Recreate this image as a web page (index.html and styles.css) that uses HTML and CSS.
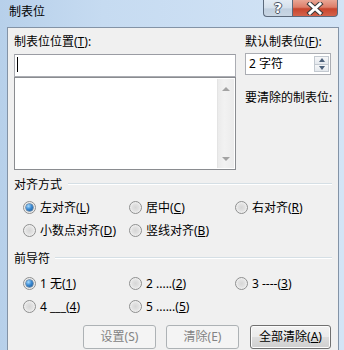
FILE: index.html
```html
<!DOCTYPE html>
<html>
<head>
<meta charset="utf-8">
<link rel="stylesheet" href="styles.css">
</head>
<body>
<div class="window">
  <div class="titlebar">
    <div class="title">制表位</div>
    <div class="caption">
      <div class="cbtn help"><span class="qmark">?</span></div>
      <div class="cbtn close">
        <svg width="18" height="13" viewBox="0 0 18 13">
          <path d="M4 2 L14 11 M14 2 L4 11" stroke="#3a3a3a" stroke-width="5" stroke-linecap="square" fill="none"/>
          <path d="M4 2 L14 11 M14 2 L4 11" stroke="#ffffff" stroke-width="3" stroke-linecap="square" fill="none"/>
        </svg>
      </div>
    </div>
  </div>
  <div class="client">
    <div class="top">
      <div class="leftcol">
        <div class="lbl">制表位位置(<u>T</u>):</div>
        <div class="input"><span class="caret"></span></div>
        <div class="list">
          <div class="list-body"></div>
          <div class="vscroll">
            <span class="arr up"></span>
            <span class="arr down"></span>
          </div>
        </div>
      </div>
      <div class="rightcol">
        <div class="lbl">默认制表位(<u>F</u>):</div>
        <div class="spin">
          <span class="spin-val">2 字符</span>
          <div class="spin-btns">
            <div class="sb"><span class="sarr up"></span></div>
            <div class="sb"><span class="sarr down"></span></div>
          </div>
        </div>
        <div class="lbl clear-lbl">要清除的制表位:</div>
      </div>
    </div>

    <div class="group g1">
      <div class="ghead"><span class="gtitle">对齐方式</span><span class="gline"></span></div>
      <div class="radios">
        <div class="opt"><span class="radio on"></span><span>左对齐(<u>L</u>)</span></div>
        <div class="opt"><span class="radio"></span><span>居中(<u>C</u>)</span></div>
        <div class="opt"><span class="radio"></span><span>右对齐(<u>R</u>)</span></div>
        <div class="opt"><span class="radio"></span><span>小数点对齐(<u>D</u>)</span></div>
        <div class="opt"><span class="radio"></span><span>竖线对齐(<u>B</u>)</span></div>
      </div>
    </div>

    <div class="group g2">
      <div class="ghead"><span class="gtitle">前导符</span><span class="gline"></span></div>
      <div class="radios">
        <div class="opt"><span class="radio on"></span><span>1 无(<u>1</u>)</span></div>
        <div class="opt"><span class="radio"></span><span>2 .....(<u>2</u>)</span></div>
        <div class="opt"><span class="radio"></span><span>3 ----(<u>3</u>)</span></div>
        <div class="opt"><span class="radio"></span><span>4 ___(<u>4</u>)</span></div>
        <div class="opt"><span class="radio"></span><span>5 ......(<u>5</u>)</span></div>
      </div>
    </div>

    <div class="buttons">
      <div class="btn disabled b1">设置(S)</div>
      <div class="btn disabled b2">清除(E)</div>
      <div class="btn b3">全部清除(<u>A</u>)</div>
    </div>
  </div>
</div>
</body>
</html>
```

FILE: styles.css
```css
* { box-sizing: border-box; }
html, body { margin: 0; padding: 0; }
body {
  width: 344px;
  height: 350px;
  overflow: hidden;
  font-family: "Noto Sans", "Noto Sans CJK SC", sans-serif;
  font-size: 12px;
  line-height: 16px;
  color: #000;
}
u { text-decoration: underline; text-underline-offset: 1px; }

.window {
  width: 344px;
  height: 350px;
  display: flex;
  flex-direction: column;
  background: linear-gradient(to right, #b7d0ea 0%, #c6dbf1 30%, #d3e4f6 100%);
}

.titlebar {
  height: 27px;
  flex: none;
  display: flex;
  align-items: flex-start;
}
.title {
  flex: 1;
  padding-left: 9px;
  padding-top: 3px;
  line-height: 16px;
  font-family: "Noto Sans CJK SC", sans-serif;
}
.caption {
  display: flex;
  margin-right: 6px;
}
.cbtn {
  height: 17px;
  border: 1px solid #5c6a7c;
  border-top: none;
  display: flex;
  align-items: center;
  justify-content: center;
}
.help {
  width: 29px;
  border-radius: 0 0 0 4px;
  border-right: none;
  background: linear-gradient(to bottom, #e3ebf4 0%, #d4dfeb 50%, #c0cfdf 55%, #c9d6e4 100%);
}
.qmark {
  font-family: "DejaVu Sans", sans-serif;
  font-weight: bold;
  font-size: 14px;
  line-height: 14px;
  color: #fff;
  text-shadow: -1px 0 #4a5565, 1px 0 #4a5565, 0 -1px #4a5565, 0 1px #4a5565;
}
.close {
  width: 46px;
  border-radius: 0 0 4px 0;
  background: linear-gradient(to bottom, #e9a695 0%, #dd7e69 45%, #c8452d 55%, #d4634b 100%);
}

.client {
  flex: 1;
  margin: 0 5px 0 7px;
  background: #f0f0f0;
  border: 1px solid #8393a6;
  border-bottom: none;
  padding: 6px 6px 0 6px;
}

.top {
  display: flex;
  gap: 9px;
}
.leftcol { width: 222px; display: flex; flex-direction: column; }
.rightcol { width: 86px; display: flex; flex-direction: column; }
.lbl { height: 16px; white-space: nowrap; }

.input {
  margin-top: 4px;
  height: 23px;
  background: #fff;
  border: 1px solid #abadb3;
  border-top-color: #9a9ca3;
  position: relative;
}
.caret {
  position: absolute;
  left: 2px;
  top: 2px;
  width: 1px;
  height: 15px;
  background: #000;
}
.list {
  height: 93px;
  background: #fff;
  border: 1px solid #8a8c90;
  display: flex;
}
.list-body { flex: 1; }
.vscroll {
  width: 17px;
  margin: 1px 1px 1px 0;
  background: linear-gradient(to right, #ebebeb, #f2f2f2 40%, #ebebeb);
  border-left: 1px solid #e4e4e4;
  display: flex;
  flex-direction: column;
  justify-content: space-between;
  align-items: center;
  padding: 8px 0 7px 0;
}
.arr { width: 0; height: 0; border-left: 4px solid transparent; border-right: 4px solid transparent; }
.arr.up { border-bottom: 4px solid #a3a3a3; }
.arr.down { border-top: 4px solid #a3a3a3; }

.spin {
  margin-top: 3px;
  height: 22px;
  background: #fff;
  border: 1px solid #abadb3;
  display: flex;
  align-items: center;
  padding-left: 3px;
}
.spin-val { flex: 1; font-family: "Noto Sans", "Noto Sans CJK SC", sans-serif; }
.spin-btns {
  width: 16px;
  align-self: stretch;
  display: flex;
  flex-direction: column;
  padding: 2px 1px 2px 0;
}
.sb {
  flex: 1;
  border: 1px solid #c3c9d0;
  background: linear-gradient(to bottom, #f6f7f9, #e4e8ed);
  display: flex;
  align-items: center;
  justify-content: center;
}
.sb + .sb { margin-top: 0; border-top: none; }
.sarr { width: 0; height: 0; border-left: 3.5px solid transparent; border-right: 3.5px solid transparent; }
.sarr.up { border-bottom: 4px solid #4c607a; }
.sarr.down { border-top: 4px solid #4c607a; }
.clear-lbl { margin-top: 15px; }

.group { display: flex; flex-direction: column; }
.g1 { margin-top: 7px; }
.g2 { margin-top: 9px; }
.ghead { display: flex; height: 16px; align-items: flex-start; }
.gtitle { white-space: nowrap; }
.gline {
  flex: 1;
  margin-top: 6px;
  margin-left: 6px;
  height: 2px;
  border-top: 1px solid #d5dfe5;
  border-bottom: 1px solid #ffffff;
}
.g2 .gline { margin-left: 5px; }
.radios {
  margin-top: 3px;
  padding-left: 9px;
  display: grid;
  grid-template-columns: 106px 106px 106px;
  grid-auto-rows: 23px;
}
.g2 .radios { margin-top: 5px; }
.opt {
  display: flex;
  align-items: center;
  gap: 4px;
  white-space: nowrap;
}
.radio {
  width: 13px;
  height: 13px;
  flex: none;
  border-radius: 50%;
  border: 1px solid #8e8f8f;
  background: radial-gradient(circle at 50% 50%, #d6d6d6 0%, #e2e2e2 45%, #f3f3f3 75%, #ffffff 100%);
  position: relative;
}
.radio.on::after {
  content: "";
  position: absolute;
  left: 2px;
  top: 2px;
  width: 7px;
  height: 7px;
  border-radius: 50%;
  background: radial-gradient(circle at 35% 30%, #a8dcff 0%, #3c8bd4 45%, #0f4f8e 100%);
  box-shadow: 0 0 0 0.5px #23527f;
}

.buttons {
  margin-top: 7px;
  display: flex;
  justify-content: flex-end;
  padding-right: 1px;
}
.btn {
  height: 24px;
  display: flex;
  align-items: center;
  justify-content: center;
  border-radius: 3px;
  white-space: nowrap;
}
.b1 { width: 73px; }
.b2 { width: 73px; margin-left: 10px; }
.b3 { width: 81px; margin-left: 11px; border: 1px solid #707070; background: linear-gradient(to bottom, #f2f2f2 0%, #ebebeb 50%, #dddddd 50%, #cfcfcf 100%); box-shadow: inset 0 0 0 1px #fcfcfc; }
.disabled {
  border: 1px solid #adb2b5;
  background: #f4f4f4;
  color: #838383;
}
```
